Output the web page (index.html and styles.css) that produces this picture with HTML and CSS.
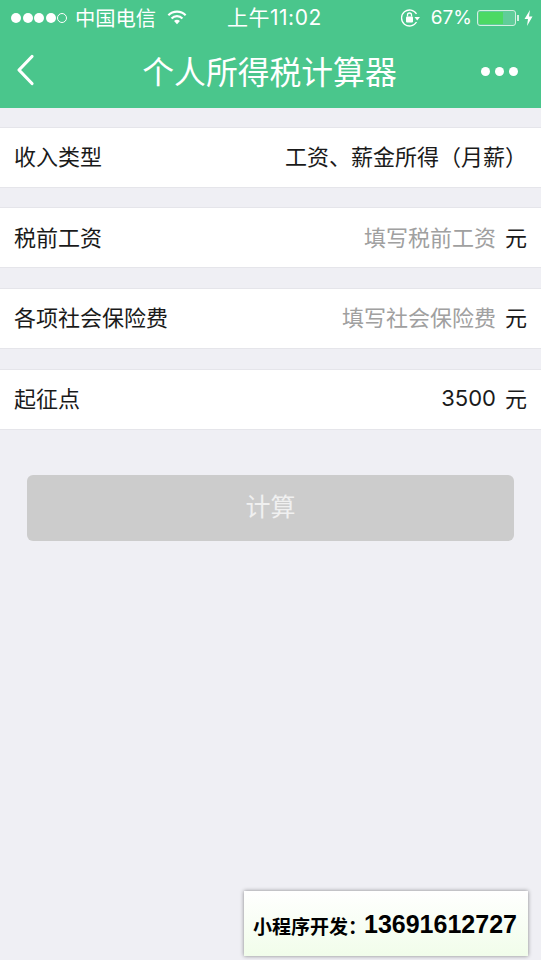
FILE: index.html
```html
<!DOCTYPE html>
<html lang="zh-CN">
<head>
    <meta charset="UTF-8">
    <meta name="viewport" content="width=device-width, initial-scale=1.0">
    <title>个人所得税计算器</title>
    <link rel="stylesheet" href="styles.css">
</head>
<body>
    <header class="header">
        <div class="status-bar">
            <div class="status-left">
                <span class="signal">
                    <i class="dot"></i><i class="dot"></i><i class="dot"></i><i class="dot"></i><i class="dot dot-empty"></i>
                </span>
                <span class="carrier">中国电信</span>
                <svg class="wifi" width="20" height="15" viewBox="0 0 22 16">
                    <path d="M1.5 5.5 A13.5 13.5 0 0 1 20.5 5.5" fill="none" stroke="#fff" stroke-width="2.4"/>
                    <path d="M5 9 A8.5 8.5 0 0 1 17 9" fill="none" stroke="#fff" stroke-width="2.4"/>
                    <path d="M7.8 11.8 A4.5 4.5 0 0 1 14.2 11.8 L11 15.5 Z" fill="#fff"/>
                </svg>
            </div>
            <div class="status-time">上午11:02</div>
            <div class="status-right">
                <svg class="lock" width="21" height="20" viewBox="0 0 21 20">
                    <path d="M16.5 6 A8 8 0 1 0 16.5 14" fill="none" stroke="#fff" stroke-width="1.3"/>
                    <path d="M14.5 9 L20 9 L17.2 12.5 Z" fill="#fff"/>
                    <rect x="6" y="8.5" width="7" height="6" rx="1" fill="#fff"/>
                    <path d="M7.5 8.5 V7 A2 2 0 0 1 11.5 7 V8.5" fill="none" stroke="#fff" stroke-width="1.3"/>
                </svg>
                <span class="battery-pct">67%</span>
                <span class="battery"><span class="battery-fill"></span></span>
                <span class="battery-cap"></span>
                <svg class="bolt" width="9" height="16" viewBox="0 0 9 16">
                    <path d="M6 0 L0.5 9 H4 L3 16 L8.5 6.5 H5 Z" fill="#fff"/>
                </svg>
            </div>
        </div>
        <nav class="nav-bar">
            <svg class="back" width="20" height="32" viewBox="0 0 20 32">
                <path d="M17 2.5 L4 16 L17 29.5" fill="none" stroke="#fff" stroke-width="3.2" stroke-linecap="round" stroke-linejoin="round"/>
            </svg>
            <h1 class="nav-title">个人所得税计算器</h1>
            <div class="more"><i></i><i></i><i></i></div>
        </nav>
    </header>

    <main class="content">
        <div class="row">
            <span class="row-label">收入类型</span>
            <span class="row-value">工资、薪金所得（月薪）</span>
        </div>
        <div class="row">
            <span class="row-label">税前工资</span>
            <span class="row-value"><span class="placeholder">填写税前工资</span><span class="unit">元</span></span>
        </div>
        <div class="row">
            <span class="row-label">各项社会保险费</span>
            <span class="row-value"><span class="placeholder">填写社会保险费</span><span class="unit">元</span></span>
        </div>
        <div class="row">
            <span class="row-label">起征点</span>
            <span class="row-value"><span class="amount">3500</span><span class="unit">元</span></span>
        </div>
        <button class="calc-btn" type="button"><span class="calc-text">计算</span></button>
    </main>

    <div class="contact"><span class="contact-label">小程序开发：</span><span class="phone">13691612727</span></div>
</body>
</html>
```

FILE: styles.css
```css
* {
    box-sizing: border-box;
    margin: 0;
    padding: 0;
}

body {
    width: 541px;
    height: 960px;
    overflow: hidden;
    position: relative;
    background-color: #efeff4;
    font-family: "Noto Sans CJK SC", "Liberation Sans", sans-serif;
    color: #1a1a1a;
}

.header {
    height: 108px;
    background-color: #4ac68c;
    color: #fff;
}

.status-bar {
    height: 36px;
    padding: 0 8px 0 11px;
    display: flex;
    align-items: center;
    justify-content: space-between;
    position: relative;
}

.status-left,
.status-right {
    display: flex;
    align-items: center;
}

.signal {
    display: flex;
    gap: 1.5px;
}

.dot {
    width: 10px;
    height: 10px;
    border-radius: 50%;
    background: #fff;
}

.dot-empty {
    background: none;
    border: 1px solid #fff;
}

.carrier {
    margin-left: 8px;
    padding-bottom: 3px;
    font-size: 20.3px;
    line-height: 32px;
}

.wifi {
    margin-left: 11px;
    margin-bottom: 2px;
}

.status-time {
    position: absolute;
    left: 227px;
    top: 0;
    font-size: 21px;
    letter-spacing: 0.5px;
    line-height: 36px;
    font-family: "Inter", "Noto Sans CJK SC", sans-serif;
}

.lock {
    margin-bottom: 1px;
}

.battery-pct {
    margin-left: 10px;
    font-size: 19px;
    line-height: 34px;
    font-family: "Inter", "Liberation Sans", sans-serif;
}

.battery {
    margin-left: 5px;
    width: 39px;
    height: 16px;
    padding: 1px;
    border: 1px solid #d5f0e2;
    border-radius: 3px;
    display: block;
    background: rgba(255, 255, 255, 0.12);
}

.battery-fill {
    display: block;
    width: 24px;
    height: 100%;
    background: #4cd964;
}

.battery-cap {
    width: 2px;
    height: 6px;
    margin-left: 1px;
    background: #d5f0e2;
}

.bolt {
    margin-left: 5px;
}

.nav-bar {
    height: 72px;
    position: relative;
    display: flex;
    align-items: center;
    justify-content: center;
}

.back {
    position: absolute;
    left: 15px;
    top: 18px;
}

.nav-title {
    font-size: 31.8px;
    font-weight: 400;
    line-height: 68px;
    height: 72px;
    padding-right: 2px;
}

.more {
    position: absolute;
    right: 23px;
    top: 31px;
    display: flex;
    gap: 5px;
}

.more i {
    width: 9px;
    height: 9px;
    border-radius: 50%;
    background: #fff;
}

.content {
    padding-top: 18.6px;
}

.row {
    height: 61px;
    margin-bottom: 19.67px;
    padding: 0 14px 4px;
    display: flex;
    align-items: center;
    justify-content: space-between;
    background: #fff;
    border-top: 1px solid #e5e5ea;
    border-bottom: 1px solid #e5e5ea;
    font-size: 22px;
}

.row-value {
    display: flex;
    align-items: center;
}

.placeholder {
    color: #a0a0a0;
}

.unit {
    margin-left: 9px;
}

.amount {
    font-family: "Inter", "Liberation Sans", sans-serif;
    padding-top: 1px;
}

.calc-btn {
    display: block;
    width: 487px;
    height: 66px;
    margin: 45.4px 0 0 27px;
    border: none;
    border-radius: 6px;
    background: #cccccc;
    color: #f0f0f0;
    font-family: inherit;
    font-size: 25px;
}

.calc-text {
    display: block;
    margin-top: -6px;
}

.contact {
    position: absolute;
    left: 244px;
    top: 891px;
    width: 284px;
    height: 65px;
    padding-left: 9px;
    display: flex;
    align-items: center;
    background: linear-gradient(#fff, #f1fdea);
    box-shadow: 0 0 4px rgba(0, 0, 0, 0.45);
    color: #000;
    white-space: nowrap;
}

.contact-label {
    font-size: 19px;
    font-weight: 700;
    line-height: 1;
    width: 111px;
    margin-top: 4px;
}

.phone {
    font-family: "Liberation Sans", sans-serif;
    font-size: 25px;
    font-weight: 700;
    margin-top: 2px;
}
```
